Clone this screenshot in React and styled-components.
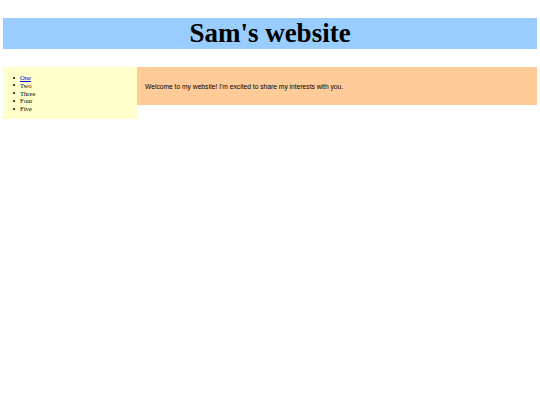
import React from "react";
import styled, { createGlobalStyle } from "styled-components";

const GlobalStyle = createGlobalStyle`
  body {
    margin: 0;
    padding: 18px 3px 0;
    background: #ffffff;
    font-family: "Liberation Serif", "Times New Roman", serif;
  }
`;

const Header = styled.header`
  background-color: #99ccff;
  height: 31px;
  display: flex;
  align-items: center;
  justify-content: center;
`;

const Title = styled.h1`
  margin: 0;
  font-size: 27px;
  font-weight: bold;
  line-height: 31px;
  color: #000;
`;

const Content = styled.div`
  display: flex;
  align-items: flex-start;
  margin-top: 18px;
`;

const SideBar = styled.nav`
  width: 134px;
  flex: none;
  background-color: #ffffcc;
  padding: 7px 0 6px;
  box-sizing: border-box;
  height: 52px;
`;

const Menu = styled.ul`
  margin: 0;
  padding-left: 17px;
  list-style: none;
  font-size: 6.6px;
  line-height: 7.75px;
`;

const Item = styled.li`
  color: #000;

  &::before {
    content: "";
    display: inline-block;
    width: 2px;
    height: 2px;
    border-radius: 50%;
    background: #000;
    margin-left: -7px;
    margin-right: 5px;
    vertical-align: 1.5px;
  }
`;

const Link = styled.a`
  color: #0000ee;
  text-decoration: underline;
`;

const Main = styled.main`
  flex: 1;
  background-color: #ffcc99;
  height: 38px;
  padding: 1px 8px 0;
  box-sizing: border-box;
  display: flex;
  align-items: center;
`;

const Welcome = styled.p`
  margin: 0;
  font-family: "Liberation Sans", Arial, sans-serif;
  font-size: 6.7px;
  line-height: 8px;
  color: #000;
`;

const items = ["One", "Two", "Three", "Four", "Five"];

export default function App() {
  return (
    <>
      <GlobalStyle />
      <Header>
        <Title>Sam's website</Title>
      </Header>
      <Content>
        <SideBar>
          <Menu>
            {items.map((item, i) => (
              <Item key={item}>
                {i === 0 ? <Link href="#">{item}</Link> : item}
              </Item>
            ))}
          </Menu>
        </SideBar>
        <Main>
          <Welcome>
            Welcome to my website! I'm excited to share my interests with you.
          </Welcome>
        </Main>
      </Content>
    </>
  );
}
